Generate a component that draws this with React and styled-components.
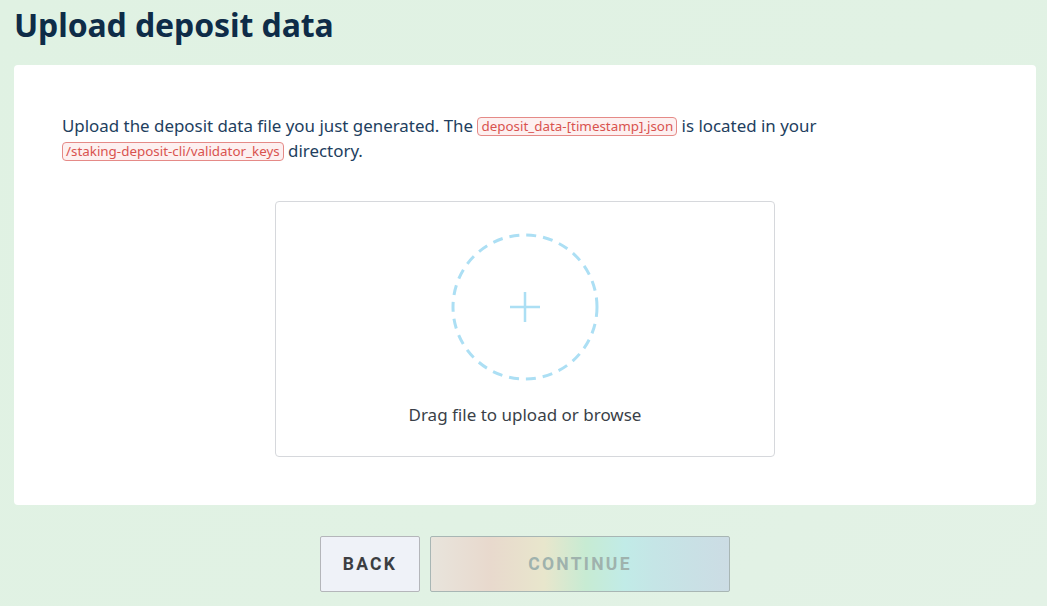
import React from "react";
import styled, { createGlobalStyle } from "styled-components";

const Global = createGlobalStyle`
  html, body { margin: 0; padding: 0; }
  body {
    width: 1047px;
    height: 606px;
    overflow: hidden;
    background: linear-gradient(135deg, #e0f2e3 0%, #e1f2e4 60%, #e3f2e6 100%);
    font-family: "Noto Sans", "Open Sans", sans-serif;
  }
`;

const Page = styled.div`
  padding: 0 11px 0 14px;
  display: flex;
  flex-direction: column;
`;

const Title = styled.h1`
  margin: 0;
  padding-top: 5px;
  height: 65px;
  box-sizing: border-box;
  font-size: 32px;
  line-height: 40px;
  font-weight: 700;
  color: #0e2c48;
  letter-spacing: -0.1px;
`;

const Card = styled.section`
  background: #ffffff;
  border-radius: 4px;
  padding: 48px;
  display: flex;
  flex-direction: column;
  align-items: stretch;
  height: 440px;
  box-sizing: border-box;
`;

const Text = styled.p`
  margin: 0;
  font-size: 16.9px;
  line-height: 25px;
  color: #223e5e;
  max-width: 790px;
`;

const Code = styled.code`
  font-family: "Noto Sans", "Open Sans", sans-serif;
  font-size: 13.4px;
  line-height: 17px;
  display: inline-block;
  color: #d9534f;
  background: #fdf0f0;
  border: 1px solid #e58a87;
  border-radius: 4px;
  padding: 0 3px;
  vertical-align: 1px;
`;

const Drop = styled.div`
  margin: 38px auto 0;
  width: 500px;
  height: 256px;
  box-sizing: border-box;
  border: 1px solid #d6d8dc;
  border-radius: 4px;
  display: flex;
  flex-direction: column;
  align-items: center;
  padding-top: 31px;
`;

const Circle = styled.svg`
  display: block;
`;

const DropLabel = styled.div`
  margin-top: 22px;
  font-size: 17px;
  line-height: 24px;
  color: #3a3f48;
`;

const Actions = styled.div`
  display: flex;
  justify-content: center;
  gap: 10px;
  margin-top: 31px;
`;

const Button = styled.button`
  height: 56px;
  width: ${(p) => p.$w}px;
  box-sizing: border-box;
  border: 1px solid ${(p) => (p.$disabled ? "#a8b6b4" : "#b4b6ba")};
  border-radius: 2px;
  background: ${(p) =>
    p.$disabled
      ? "linear-gradient(90deg, #e8e4dc 0%, #e8d9cd 20%, #e8e6cc 38%, #c7ebd3 52%, #c1ebe7 65%, #c5e5e6 75%, #ccdce4 100%)"
      : "#eff2f8"};
  font-family: Roboto, "Liberation Sans", sans-serif;
  font-weight: 700;
  font-size: 17.5px;
  letter-spacing: 2.3px;
  color: ${(p) => (p.$disabled ? "#9fb2ad" : "#3c3e42")};
  cursor: ${(p) => (p.$disabled ? "default" : "pointer")};
  padding: 0;
`;

export default function App() {
  return (
    <>
      <Global />
      <Page>
        <Title>Upload deposit data</Title>
        <Card>
          <Text>
            Upload the deposit data file you just generated. The{" "}
            <Code>deposit_data-[timestamp].json</Code> is located in your{" "}
            <Code>/staking-deposit-cli/validator_keys</Code> directory.
          </Text>
          <Drop>
            <Circle width="148" height="148" viewBox="0 0 148 148">
              <circle
                cx="74"
                cy="74"
                r="72"
                fill="none"
                stroke="#acdff4"
                strokeWidth="3"
                strokeDasharray="10 7"
              />
              <path
                d="M74 59 V89 M59 74 H89"
                stroke="#acdff4"
                strokeWidth="2.5"
                fill="none"
              />
            </Circle>
            <DropLabel>Drag file to upload or browse</DropLabel>
          </Drop>
        </Card>
        <Actions>
          <Button $w={100}>BACK</Button>
          <Button $w={300} $disabled disabled>
            CONTINUE
          </Button>
        </Actions>
      </Page>
    </>
  );
}
